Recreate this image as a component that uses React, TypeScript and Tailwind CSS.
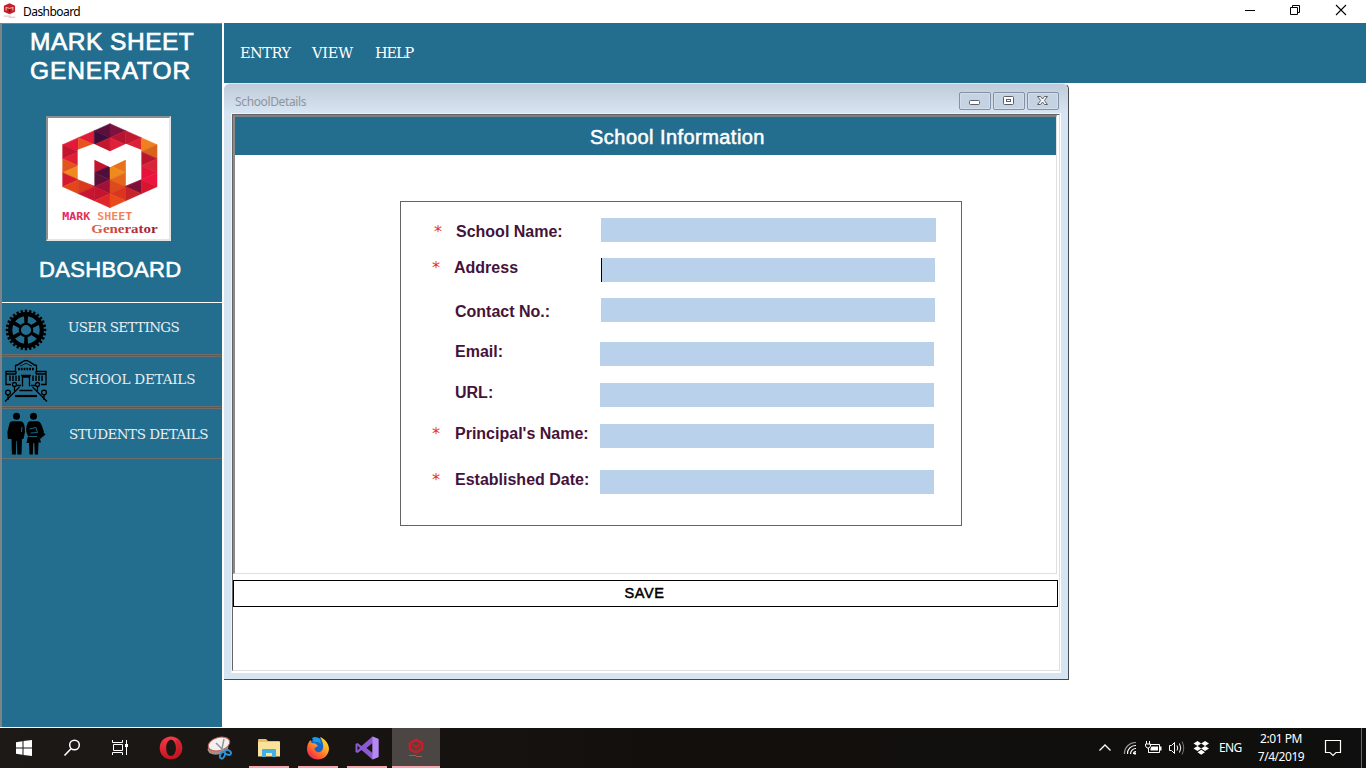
import React from "react";

const UI = "font-['Noto_Sans',sans-serif]";
const SLAB = "font-['DejaVu_Serif',serif]";

/* Facet colours of the hexagon, one list per vertical strip, top to bottom. */
const FACETS: string[][] = [
  ["#e4193a", "#c4152f", "#df1f35", "#e2531f", "#ee8a1f", "#d4182f", "#e2471b"],
  ["#e01b35", "#e9511f", "#d9251f", "#c01a30", "#c01a30", "#c01a30", "#d4302a", "#d83a1c", "#c9152f"],
  ["#5a0f3c", "#3f0d3a", "#c2162f", "#e0182f", "#b0122e", "#c2162f", "#4f0d3a", "#5c1238", "#a31038", "#c3132f", "#e0262a"],
  ["#7d1140", "#b3152f", "#e0203a", "#ec1c3a", "#e8731c", "#e8731c", "#ef8b1c", "#e5671c", "#dd4a1c", "#d9351f", "#e84a1c"],
  ["#c01a30", "#df1f35", "#ee6a1f", "#e01b35", "#e01b35", "#dd1f35", "#c8162f", "#7d1038", "#c8222a"],
  ["#f0801f", "#d9621f", "#b9152f", "#d9253a", "#e5123a", "#ef1440", "#d8152f"],
];

function Facets() {
  const xs = [67, 114, 162, 209, 256, 303, 350];
  const top = [105, 84, 63, 42, 63, 84, 105];
  const out: React.ReactElement[] = [];
  FACETS.forEach((colors, s) => {
    const leftFirst = s > 2;
    let l = top[s];
    let r = top[s + 1];
    colors.forEach((c, i) => {
      const moveLeft = (i % 2 === 0) === leftFirst;
      const nl = moveLeft ? l + 42 : l;
      const nr = moveLeft ? r : r + 42;
      const third = moveLeft ? `${xs[s]},${nl}` : `${xs[s + 1]},${nr}`;
      out.push(
        <polygon key={`${s}-${i}`} points={`${xs[s]},${l} ${xs[s + 1]},${r} ${third}`} fill={c} stroke={c} strokeWidth="1.6" />,
      );
      l = nl;
      r = nr;
    });
  });
  return <>{out}</>;
}

function HexMark() {
  return (
    <>
      <Facets />
      <path d="M112 120 160 102 209 125 257 102 303 120V209L256 228V150L209 173 162 150V228L112 209Z" fill="#fff" />
    </>
  );
}

function Logo() {
  return (
    <svg width="121" height="121" viewBox="23 25 363 363">
      <defs>
        <linearGradient id="mk" x1="66" x2="276" y1="0" y2="0" gradientUnits="userSpaceOnUse">
          <stop offset="0" stopColor="#ee1a5c" />
          <stop offset="0.4" stopColor="#dd3a50" />
          <stop offset="0.55" stopColor="#f09070" />
          <stop offset="1" stopColor="#ee7a4a" />
        </linearGradient>
        <linearGradient id="gen" x1="153" x2="352" y1="0" y2="0" gradientUnits="userSpaceOnUse">
          <stop offset="0" stopColor="#e0604a" />
          <stop offset="0.5" stopColor="#c23a38" />
          <stop offset="1" stopColor="#8e1c3c" />
        </linearGradient>
      </defs>
      <HexMark />
      <text x="66" y="332" textLength="210" lengthAdjust="spacingAndGlyphs" fontFamily="DejaVu Sans Mono" fontWeight="bold" fontSize="33" fill="url(#mk)">MARK SHEET</text>
      <text x="153" y="371" textLength="199" lengthAdjust="spacingAndGlyphs" fontFamily="Liberation Serif" fontWeight="bold" fontSize="37" fill="url(#gen)">Generator</text>
    </svg>
  );
}

function MiniLogo({ className }: { className: string }) {
  return (
    <svg className={className} viewBox="60 30 296 350" preserveAspectRatio="none">
      <path d="M209 36 335 95V232L209 295 80 232V95Z" fill="#c4202c" />
      <path d="M130 205V132L209 160 285 132V205" fill="none" stroke="#eeb0a8" strokeWidth="24" />
      <path d="M209 165V240" stroke="#7a1020" strokeWidth="34" />
      <path d="M75 335H240M190 362H340" stroke="#c98078" strokeWidth="12" />
    </svg>
  );
}

function TaskLogo() {
  return (
    <svg width="18" height="20" viewBox="0 0 18 20" fill="none">
      <path d="M9 2 15 5V11L9 14.500 3 11V5Z" stroke="#c51f2a" strokeWidth="2.600" />
      <path d="M6.500 9V7L9 8.500 11.500 7V9.500M9 8.500V12" stroke="#c51f2a" strokeWidth="1.600" />
      <path d="M2 17.500H9M9 18.500H15" stroke="#a5605c" strokeWidth="0.900" />
    </svg>
  );
}

function Gear() {
  const teeth = Array.from({ length: 28 }, (_, i) => (i * 360) / 28);
  const spokes = [0, 60, 120, 180, 240, 300];
  return (
    <svg width="42" height="42" viewBox="-21 -21 42 42">
      {teeth.map((a) => (
        <rect key={a} x="-1.2" y="-20.3" width="2.4" height="5" transform={`rotate(${a})`} />
      ))}
      <circle r="15.8" fill="none" stroke="#000" strokeWidth="4.2" />
      <circle r="6.2" fill="none" stroke="#000" strokeWidth="2.2" />
      {spokes.map((a) => (
        <path key={a} d="M-1.6-6.500H1.6L2-14.500H-2Z" transform={`rotate(${a})`} />
      ))}
    </svg>
  );
}

function School() {
  return (
    <svg width="44" height="44" viewBox="0 0 44 44" fill="none" stroke="#000" strokeWidth="1.3">
      <path d="M11.500 10V6.500C15 6.500 18 1.500 22 1.500S29 6.500 32.500 6.500V10" />
      <path d="M16 7C19 6.500 20 4.500 22 4.500S25 6.500 28 7" strokeWidth="0.9" />
      <path d="M11.500 10V12.500H2V25.500H7M32.500 10V12.500H42V25.500H37M2 15H12M32 15H42M12 12V15M32 12V15M13 26.500H17M27 26.500H31" />
      <path d="M6 16.500V22M9 16.500V22M12 16.500V22M15 16.500V22M29 16.500V22M32 16.500V22M35 16.500V22M38 16.500V22" strokeWidth="1.5" />
      <path d="M18.500 27.500V18H25.500V27.500M17 16.500H27" />
      <path d="M15.500 28 1 42.500M28.500 28 43 42.500M15.500 31.500H28.500" />
      <path d="M11 37H33" strokeWidth="2.2" />
      <circle cx="10.500" cy="25.500" r="2" /><circle cx="33.500" cy="25.500" r="2" />
      <circle cx="4" cy="33.500" r="2.400" /><circle cx="40" cy="33.500" r="2.400" />
      <path d="M10.500 27.500V32M33.500 27.500V32M4 35.500V41M40 35.500V41" />
      <path d="M14 10H30" strokeWidth="2.400" strokeDasharray="1.800 1" />
    </svg>
  );
}

function Students() {
  return (
    <svg width="40" height="44" viewBox="0 0 40 44">
      <circle cx="9.500" cy="4.200" r="3.500" /><circle cx="26.500" cy="4.200" r="3.500" />
      <path d="M5.500 9.200H13.500C16 9.200 17.500 12 17.700 15L18 20 16.500 27H15L14.500 42.500H10.300L9.900 29H9.300L8.900 42.500H4.900L4.500 27H.8L.4 20 2.300 12C2.800 10 3.800 9.200 5.500 9.200Z" />
      <path d="M23 9.200H30.300C33 9.200 34 11.500 35 14L37 20 32.500 25 34 30.500H31.500L31 42.500H27.800L27.300 31H26.300L25.800 42.500H22.500L22 31H19.500L21 24 19.300 20C19 14 20.500 9.200 23 9.200Z" />
      <path d="M30.500 22 35.500 19.500 38.500 22.500 33 27Z" />
      <path d="M15 15 14.500 20M22.500 17 29 15.500 30.500 20.500 23.500 21M21.500 24.500H30" fill="none" stroke="#236e8f" strokeWidth="0.9" />
    </svg>
  );
}

function NavItem({ icon, label, className, textClass }: { icon: React.ReactNode; label: string; className: string; textClass: string }) {
  return (
    <div className={`flex border-b border-[#706c6a] ${className}`}>
      <div className="w-[66px] shrink-0 pl-[3px]">{icon}</div>
      <span className={`${SLAB} whitespace-nowrap text-[13.5px] leading-5 text-[#e9eff3] ${textClass}`}>{label}</span>
    </div>
  );
}

function Sidebar() {
  return (
    <aside className="flex h-[704px] w-[222px] shrink-0 flex-col border-l-2 border-t border-[#7d8489] bg-[#236e8f] font-['Liberation_Sans',sans-serif] text-white">
      <h1 className="pl-[28px] pt-[3px] text-[24.5px] leading-[29px] tracking-[0.5px] [-webkit-text-stroke:0.7px_white]">
        MARK SHEET
        <br />
        <span className="tracking-[0.9px]">GENERATOR</span>
      </h1>
      <div className="ml-[44px] mt-[31px] h-[125px] w-[125px] border-2 border-b-[#e5e5e5] border-l-[#8a8f92] border-r-[#e5e5e5] border-t-[#8a8f92] bg-white">
        <Logo />
      </div>
      <h2 className="mt-[15px] h-[46px] pl-[37px] text-[22px] leading-[28px] tracking-[0.35px] [-webkit-text-stroke:0.6px_white]">DASHBOARD</h2>
      <nav className="border-t border-white">
        <NavItem className="h-[52px]" textClass="pt-[14px] tracking-[-0.65px]" label="USER SETTINGS" icon={<div className="pt-[6px]"><Gear /></div>} />
        <NavItem className="mt-px h-[51px] border-t" textClass="pt-[12px] pl-px tracking-[-0.2px]" label="SCHOOL DETAILS" icon={<div className="-ml-px pt-[2px]"><School /></div>} />
        <NavItem className="mt-px h-[51px] border-t" textClass="pt-[15px] pl-px tracking-[-0.5px]" label="STUDENTS DETAILS" icon={<div className="pl-[2px] pt-[3px]"><Students /></div>} />
      </nav>
    </aside>
  );
}

type FieldSpec = { label: string; required?: boolean; row: string; star: string; text: string; input: string; caret?: boolean };

const FIELDS: FieldSpec[] = [
  { label: "School Name:", required: true, row: "mt-[16px]", star: "pl-[33px]", text: "pl-[1px] mt-[2px]", input: "ml-[1px] w-[335px]" },
  { label: "Address", required: true, row: "mt-[16px]", star: "pl-[31px] -mt-[4px]", text: "-ml-[1px] mr-[1px] -mt-[2px]", input: "ml-[1px] w-[334px]", caret: true },
  { label: "Contact No.:", row: "mt-[16px]", star: "", text: "mt-[2px]", input: "ml-[1px] w-[334px]" },
  { label: "Email:", row: "mt-[20px]", star: "", text: "-mt-[2px]", input: "w-[334px]" },
  { label: "URL:", row: "mt-[17px]", star: "", text: "-mt-[2px]", input: "w-[334px]" },
  { label: "Principal's Name:", required: true, row: "mt-[17px]", star: "pl-[31px] -mt-[4px]", text: "-mt-[2px]", input: "w-[334px]" },
  { label: "Established Date:", required: true, row: "mt-[22px]", star: "pl-[31px] -mt-[4px]", text: "-mt-[2px]", input: "w-[334px]" },
];

function Field({ f }: { f: FieldSpec }) {
  return (
    <div className={`flex h-6 ${f.row}`}>
      <span className={`w-[54px] shrink-0 font-['DejaVu_Sans',sans-serif] text-[16px] leading-[28px] text-[#e8302c] ${f.star}`}>{f.required ? "*" : ""}</span>
      <label className={`w-[145px] shrink-0 whitespace-nowrap text-[16px] font-bold leading-6 text-[#46123a] ${f.text}`}>{f.label}</label>
      <div className={`h-6 bg-[#b9d1ea] ${f.caret ? "border-l border-black" : ""} ${f.input}`} />
    </div>
  );
}

function WinButton({ children }: { children: React.ReactNode }) {
  return (
    <div className="flex h-[18px] w-8 items-center justify-center rounded-[2px] border border-[#8390a6] bg-[#c5d2e1] pr-px shadow-[inset_0_0_0_1px_#d3deea]">
      <svg className="-ml-px" width="14" height="12" viewBox="0 0 14 12">{children}</svg>
    </div>
  );
}

function SchoolWindow() {
  return (
    <section className="flex h-[597px] w-[845px] flex-col rounded-t-[6px] border-b border-r border-t border-[#464b52] border-t-[#dce8f3] bg-[#d7e4f1] pl-[7px]">
      <header className="-ml-[7px] flex h-[29px] items-start justify-between rounded-t-[6px] bg-gradient-to-b from-[#bfcbd9] to-[#d7e4f1] pl-[11px] pr-[9px]">
        <span className={`${UI} pt-[8px] text-[12px] leading-5 tracking-[-0.36px] text-[#8d949c]`}>SchoolDetails</span>
        <div className="flex gap-[2px] pt-[8px]">
          <WinButton><rect x="2.500" y="5.500" width="10" height="4" rx="1" fill="#fff" stroke="#59606b" /></WinButton>
          <WinButton><rect x="2.500" y="1.500" width="10" height="8" rx="1" fill="#fff" stroke="#59606b" /><rect x="5.500" y="4.500" width="4" height="2" fill="#fff" stroke="#59606b" /></WinButton>
          <WinButton><path d="M2.500 1.500H5.500L7.500 4 9.500 1.500H12.500L9.300 5.500 12.500 9.500H9.500L7.500 7 5.500 9.500H2.500L5.700 5.500Z" fill="#fff" stroke="#59606b" /></WinButton>
        </div>
      </header>
      <div className="flex h-[560px] w-[830px] flex-col border border-white border-l-[#eef3f8] border-t-[#eef3f8] bg-white">
        <div className="flex h-[557px] flex-col border border-[#dfdfdf] border-l-[#656565] border-t-[#656565]">
          <div className="flex h-[459px] w-[824px] flex-col border-2 border-b border-r border-[#e0e0e0] border-l-[#8a8a8a] border-t-[#808080] font-['Liberation_Sans',sans-serif]">
            <div className="h-[38px] w-[821px] bg-[#236e8f] pl-[64px] pt-[5px] text-center text-[20px] leading-[31px] tracking-[0.45px] text-white [-webkit-text-stroke:0.55px_white]">
              School Information
            </div>
            <div className="ml-[165px] mt-[46px] h-[325px] w-[562px] border border-[#646464]">
              {FIELDS.map((f) => <Field key={f.label} f={f} />)}
            </div>
          </div>
          <button className="mt-[6px] h-[27px] w-[825px] border border-black pr-[2px] font-['Liberation_Sans',sans-serif] text-[14.5px] leading-[23px] tracking-[0.6px] text-black [-webkit-text-stroke:0.5px_black]">SAVE</button>
        </div>
      </div>
    </section>
  );
}

function TitleBar() {
  return (
    <header className="flex h-[23px] items-center justify-between bg-white pl-[3px]">
      <div className="flex items-center">
        <MiniLogo className="mb-[2px] h-[15px] w-[13px]" />
        <span className={`${UI} ml-[7px] text-[12px] leading-[23px] tracking-[-0.55px] text-black`}>Dashboard</span>
      </div>
      <svg width="126" height="23" viewBox="1240 0 126 23" fill="none" stroke="#000">
        <path d="M1245 10.500H1255M1290.500 7.500H1297.500V14.500H1290.500ZM1292.500 7.500V5.500H1299.500V12.500H1297.500" />
        <path d="M1336 5 1346 15M1346 5 1336 15" strokeWidth="1.1" />
      </svg>
    </header>
  );
}

function TaskCell({ children, open, active }: { children: React.ReactNode; open?: boolean; active?: boolean }) {
  return (
    <div className={`flex h-10 flex-col items-center ${active ? "ml-px w-12 bg-[#4b4643]" : "w-[49px]"}`}>
      <div className="flex h-[38px] items-center justify-center pt-[2px]">{children}</div>
      {open && <div className={`h-[2px] bg-[#f3a6ae] ${active ? "w-12" : "w-10"}`} />}
    </div>
  );
}

function Taskbar() {
  return (
    <footer className={`flex h-10 items-start justify-between bg-gradient-to-r from-[#1c1916] via-[#130f0c] to-[#0f0f0f] text-white ${UI}`}>
      <div className="flex">
        <svg width="146" height="40" viewBox="0 0 146 40" fill="none" stroke="#fff">
          <path d="M16 14.200 22.500 13.300V19.500H16ZM23.500 13.100 32 12V19.500H23.500ZM16 20.500H22.500V26.700L16 25.800ZM23.500 20.500H32V28L23.500 26.900Z" fill="#fff" stroke="none" />
          <circle cx="74.500" cy="17" r="4.800" strokeWidth="1.500" />
          <path d="M71 20.800 64.500 27.500" strokeWidth="1.600" />
          <path d="M112.500 12V14.500H122.500V12M113.500 16.500V22.500H122.500V16.500H113.500M112.500 27V24.500H122.500V27M126.500 12V27" />
          <rect x="125" y="16" width="3" height="3" fill="#fff" stroke="none" />
        </svg>
        <TaskCell>
          <svg width="24" height="24" viewBox="0 0 24 24">
            <defs><linearGradient id="op" x1="0" y1="0" x2="0" y2="1"><stop offset="0" stopColor="#fa3a48" /><stop offset="1" stopColor="#c4141f" /></linearGradient></defs>
            <path fillRule="evenodd" fill="url(#op)" d="M12 .5C18.500.5 23.300 5.500 23.300 12S18.500 23.300 12 23.300.7 18.500.7 12 5.500.5 12 .5ZM12 3.800C9 3.800 7.200 7.500 7.200 12S9 20 12 20 16.900 16.500 16.900 12 15 3.800 12 3.800Z" />
            <path d="M16 4.500C18 8 18 16 16 19.500L19.500 20.500C24 16 24 8 19.500 3.500Z" fill="#a80e1a" opacity=".35" />
          </svg>
        </TaskCell>
        <TaskCell>
          <svg width="26" height="24" viewBox="0 0 26 24">
            <ellipse cx="11" cy="12" rx="10.500" ry="6.500" fill="#a88d86" transform="rotate(-12 11 12)" />
            <ellipse cx="12" cy="8" rx="11" ry="6.500" fill="#f3f0ee" stroke="#c45b55" strokeWidth="1" transform="rotate(-16 12 8)" />
            <path d="M9 7 17 15M17 3 14.500 15" stroke="#8d969c" strokeWidth="1.500" />
            <g fill="none" stroke="#2f8fd0" strokeWidth="2"><ellipse cx="15.500" cy="19" rx="2.200" ry="3.500" transform="rotate(25 15 19)" /><ellipse cx="21" cy="16.500" rx="3.300" ry="2.200" transform="rotate(25 21 16)" /></g>
          </svg>
        </TaskCell>
        <TaskCell open>
          <svg width="22" height="20" viewBox="0 0 22 20">
            <path d="M0 2Q0 1 1 1H8L10 3H21Q22 3 22 4V18H0Z" fill="#e9bf5f" />
            <path d="M0 4H22V18.500H0Z" fill="#fbe29b" />
            <path d="M4 19V12Q4 11 5 11H17Q18 11 18 12V19H14V15H8V19Z" fill="#44b0de" />
          </svg>
        </TaskCell>
        <TaskCell open>
          <svg width="24" height="24" viewBox="0 0 24 24">
            <defs><linearGradient id="ff" x1="1" y1="0" x2="0.200" y2="1"><stop offset="0" stopColor="#fff04a" /><stop offset=".4" stopColor="#ffab24" /><stop offset=".75" stopColor="#ff5830" /><stop offset="1" stopColor="#e3215c" /></linearGradient></defs>
            <circle cx="12" cy="11.500" r="9.500" fill="#1268c8" />
            <path d="M14 1C19 3 23 7.500 23 13.500 22 20 17.500 23.500 12 23.500 5.500 23.500 1 19 1 13 1 9 2.500 6 4.500 4L5.500 7 9.500 7.500 12 10 8.500 12C8.500 15 11 17 14 16 18 14.500 18.500 8 14 1Z" fill="url(#ff)" />
            <path d="M6 2C9 0 12 1 14 3L15 8 12 6 8 6Z" fill="#1b9ae8" />
          </svg>
        </TaskCell>
        <TaskCell open>
          <svg width="24" height="24" viewBox="0 0 24 24">
            <path d="M17.500.5 23.500 3V21L17.500 23.500 6.500 14 2.500 17 .5 16V8L2.500 7 6.500 10ZM17.500 7 11.500 12 17.500 17ZM2.500 9.500V14.500L5 12Z" fill="#8c5ad0" fillRule="evenodd" />
            <path d="M17.500.5 23.500 3V21L17.500 23.500Z" fill="#b58af0" />
          </svg>
        </TaskCell>
        <TaskCell open active><TaskLogo /></TaskCell>
      </div>
      <div className="flex h-10">
        <svg width="116" height="40" viewBox="1096 0 116 40" fill="none" stroke="#fff">
          <path d="M1099.500 22.500 1105 17 1110.500 22.500" strokeWidth="1.300" />
          <g strokeWidth="1.200"><path d="M1124.500 26A11 11 0 0 1 1136 14.500" stroke="#999" /><path d="M1127.500 26A8 8 0 0 1 1136 17.500M1130.500 26A5.500 5.500 0 0 1 1136 20.500M1133.500 26A2.500 2.500 0 0 1 1136 23.500" /></g>
          <rect x="1134" y="24.500" width="2" height="2" fill="#fff" stroke="none" />
          <path d="M1149.500 16.500H1159.500V24.500H1148.500V20M1146.500 13V16M1149.500 13V16M1145.500 16H1150.500V18L1149 20H1147L1145.500 18ZM1148.500 20V24.500" />
          <path d="M1151.500 18.500H1158V22.500H1150.500V20.500ZM1160 18.500H1161.500V22.500H1160Z" fill="#fff" stroke="none" />
          <path d="M1169.500 17.500H1171.500L1174.500 14.500V25.500L1171.500 22.500H1169.500ZM1177 17.500Q1178.500 20 1177 22.500M1179.500 15.500Q1182 20 1179.500 24.500" />
          <path d="M1182 13.500Q1185.500 20 1182 26.500" stroke="#777" />
          <path d="M1193.500 15.500 1197.500 13 1201.200 15.500 1205 13 1209 15.500 1205 18 1209 20.500 1205 23 1201.200 20.500 1197.500 23 1193.500 20.500 1197.500 18ZM1197.500 24.200 1201.200 21.800 1205 24.200 1201.200 26.700Z" fill="#fff" stroke="none" />
          <path d="M1197.500 18 1201.200 15.500 1205 18 1201.200 20.500Z" fill="#111" stroke="none" />
        </svg>
        <span className="ml-[7px] w-[30px] text-[12px] leading-[39px] tracking-[-0.6px]">ENG</span>
        <div className="w-[64px] pt-[2px] text-center text-[12px] leading-[18px] tracking-[-0.45px]">
          2:01 PM
          <br />
          7/4/2019
        </div>
        <svg width="53" height="40" viewBox="1313 0 53 40" fill="none" stroke="#fff">
          <path d="M1325.500 12.500H1340.500V24.500H1336L1333 27.500 1330 24.500H1325.500Z" strokeWidth="1.200" />
          <path d="M1361.500 0V40" stroke="#666" />
        </svg>
      </div>
    </footer>
  );
}

export default function App() {
  return (
    <div className="flex h-[768px] w-[1366px] flex-col overflow-hidden bg-white">
      <TitleBar />
      <div className="flex h-[705px]">
        <Sidebar />
        <main className="ml-[2px] flex grow flex-col">
          <nav className={`flex h-[60px] items-center gap-[21px] bg-[#236e8f] pl-[16px] pt-[2px] text-[14.5px] text-white ${SLAB}`}>
            <span className="w-[51px] tracking-[-0.5px]">ENTRY</span>
            <span className="w-[42px] tracking-[-0.2px]">VIEW</span>
            <span className="tracking-[-1.1px]">HELP</span>
          </nav>
          <SchoolWindow />
        </main>
      </div>
      <Taskbar />
    </div>
  );
}
